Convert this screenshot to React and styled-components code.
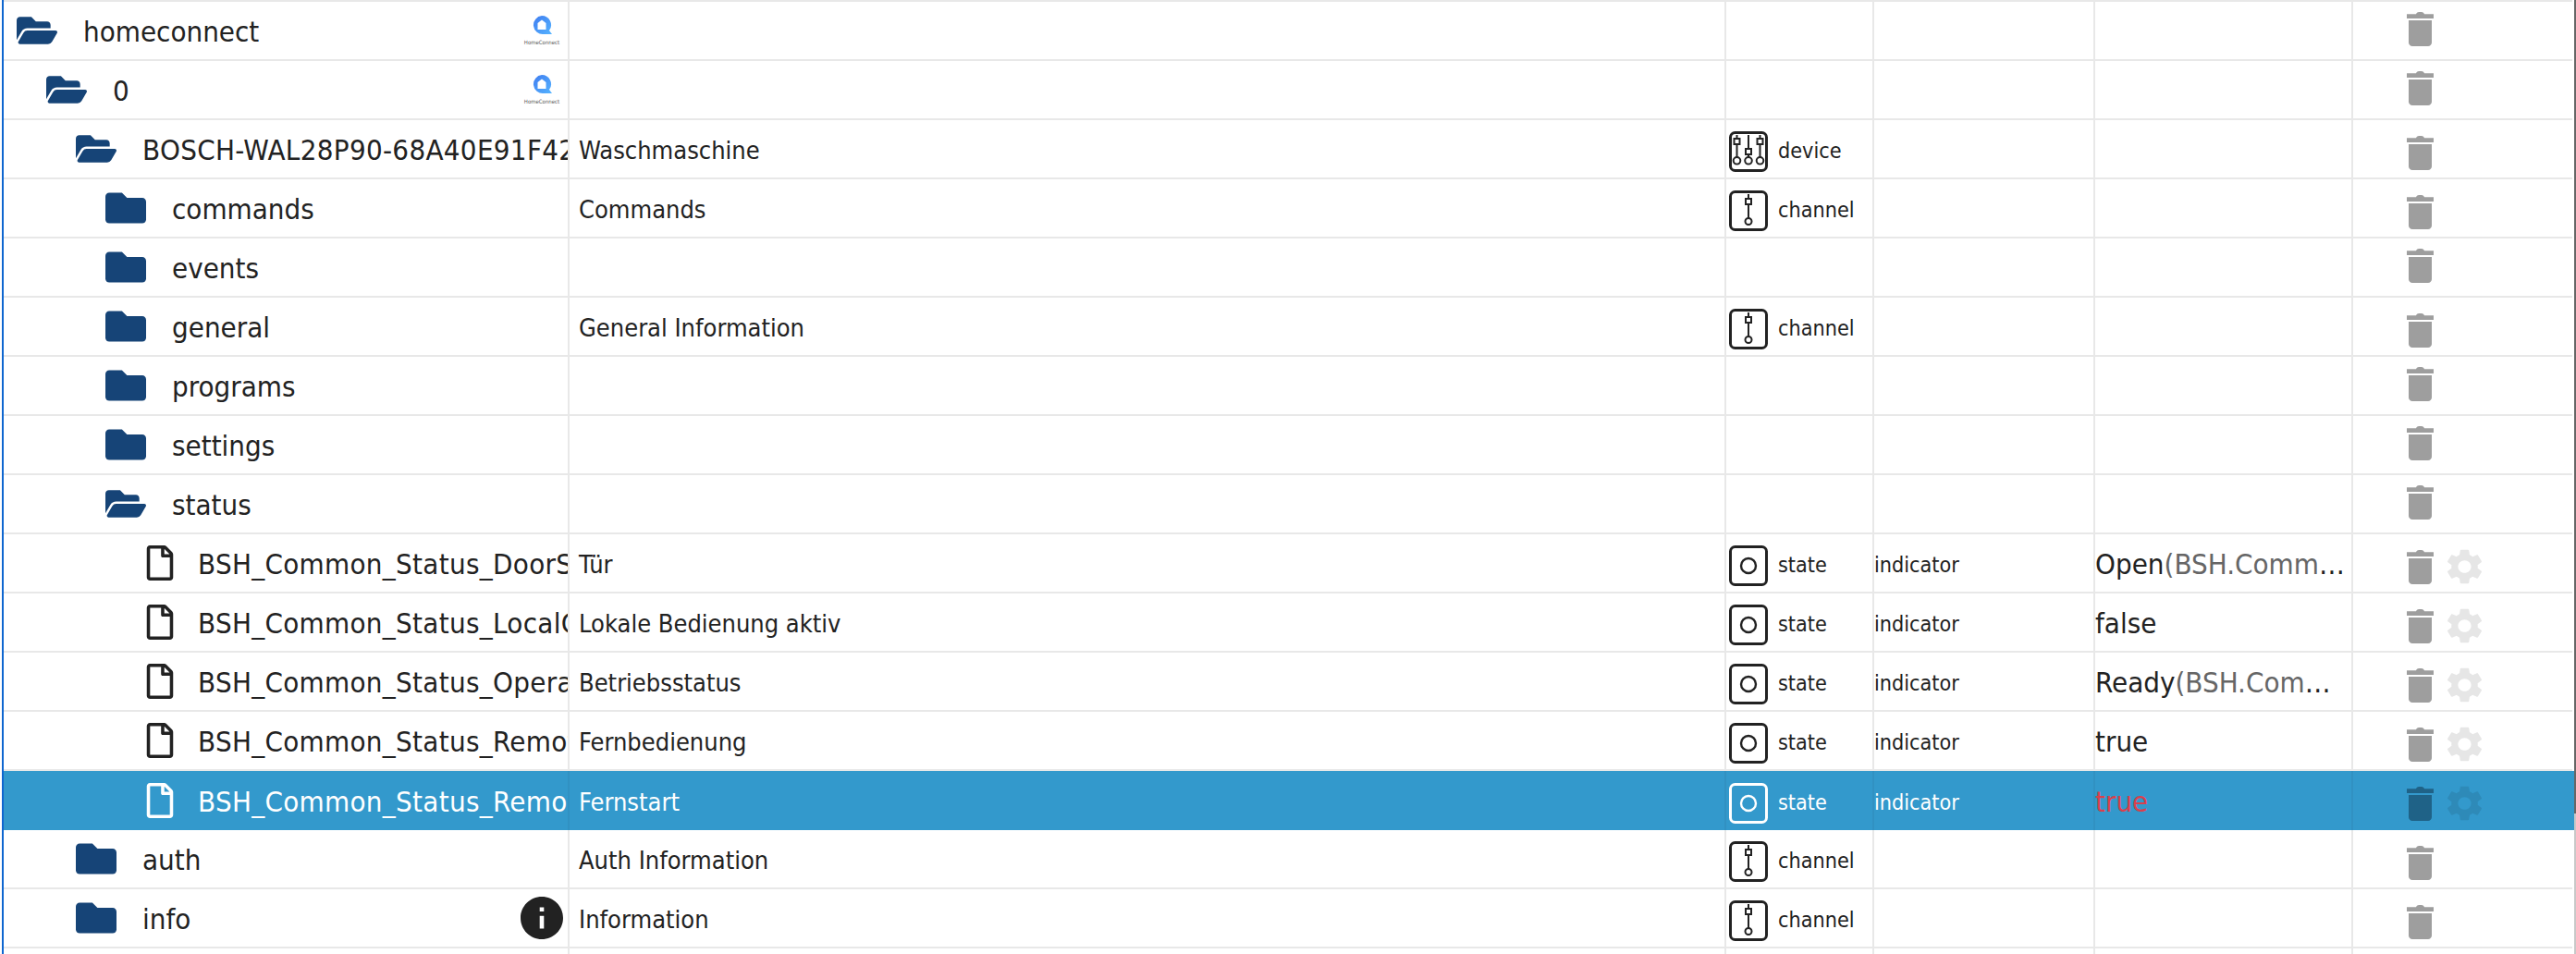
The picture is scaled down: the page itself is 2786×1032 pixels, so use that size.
import React from 'react';
import styled, { createGlobalStyle } from 'styled-components';
import { FaFolder, FaFolderOpen, FaRegFile } from 'react-icons/fa';

const Global = createGlobalStyle`
  html, body { margin: 0; padding: 0; background: #fff; overflow: hidden; }
  * { box-sizing: border-box; }
`;

const Page = styled.div`
  position: relative;
  width: 2786px;
  height: 1032px;
  overflow: hidden;
  background: #fff;
  padding-left: 2px;
  font-family: "DejaVu Sans Condensed", "DejaVu Sans", sans-serif;
  font-stretch: condensed;
  color: #222;
`;
const Table = styled.div`
  border-left: 2px solid #0f66cf;
  width: 2782px;
  height: 1032px;
  overflow: hidden;
`;
const TopRule = styled.div`
  height: 2px;
  margin-right: 2px;
  background: #e8e8e8;
`;
const Row = styled.div`
  display: grid;
  grid-template-columns: 612px 1251px 160px 239px 279px 1fr;
  height: 64px;
  margin-right: ${p => (p.$selected ? '0' : '2px')};
  background: ${p => (p.$selected ? '#3399cc' : '#fff')};
  color: ${p => (p.$selected ? '#fff' : '#222')};
  border-bottom: 2px solid ${p => (p.$selected ? '#3399cc' : '#e8e8e8')};
`;
const Cell = styled.div`
  display: flex;
  align-items: center;
  min-width: 0;
  overflow: hidden;
  white-space: nowrap;
  border-right: 2px solid ${p => (p.$selected ? '#3191c2' : '#e8e8e8')};
  margin-bottom: ${p => (p.$selected ? '-2px' : '0')};
`;
const NameCell = styled(Cell)`
  padding-left: ${p => p.$left}px;
`;
const IconSlot = styled.div`
  flex: none;
  width: ${p => p.$width}px;
  display: flex;
  align-items: center;
  font-size: ${p => p.$size}px;
  color: ${p => p.$color};
`;
const NameText = styled.span`
  flex: 1 1 auto;
  min-width: 0;
  overflow: hidden;
  font-size: 31px;
  padding-top: 2px;
  letter-spacing: ${p => (p.$wide ? '0.3px' : '0')};
`;
const TreeBadge = styled.div`
  flex: none;
  width: 46px;
  margin: 0 5px 0 4px;
  display: flex;
  flex-direction: column;
  align-items: center;
  color: #222;
`;
const BadgeLabel = styled.span`
  font-size: 6px;
  line-height: 7px;
  margin-top: 4px;
  color: #555;
  white-space: nowrap;
`;
const DescCell = styled(Cell)`
  padding-left: 10px;
  padding-top: 2px;
  font-size: 27px;
`;
const TypeCell = styled(Cell)`
  padding-left: 3px;
  gap: 11px;
  font-size: 23.2px;
`;
const TypeLabel = styled.span`
  padding-top: 2px;
`;
const TypeGlyph = styled.svg`
  flex: none;
  width: 42px;
  height: 44px;
  margin-top: 6px;
  color: ${p => (p.$selected ? '#fff' : '#222')};
`;
const RoleCell = styled(Cell)`
  font-size: 23.2px;
  padding-top: 2px;
`;
const ValueCell = styled(Cell)`
  font-size: 31px;
  padding-top: 2px;
`;
const ValueText = styled.span`
  display: block;
  width: 272px;
  overflow: hidden;
  text-overflow: ellipsis;
  color: ${p => (p.$selected ? '#d9404c' : '#222')};
`;
const ValueExtra = styled.span`
  color: #666;
`;
const Actions = styled.div`
  display: flex;
  align-items: center;
  gap: 15px;
  padding-left: 58px;
  padding-top: ${p => (p.$raised ? '0' : '8px')};
  padding-bottom: ${p => (p.$raised ? '4px' : '0')};
`;
const Trash = styled.svg`
  flex: none;
  width: 29px;
  height: 37px;
  color: ${p => (p.$selected ? '#1f6287' : '#9e9e9e')};
`;
const Gear = styled.svg`
  flex: none;
  width: 37px;
  height: 38px;
  color: ${p => (p.$selected ? '#2e8ab8' : '#e6e6e6')};
`;
const ScrollTrack = styled.div`
  position: absolute;
  top: 0;
  right: 0;
  width: 2px;
  height: 1032px;
  background: #c8c8c8;
`;
const ScrollThumb = styled.div`
  width: 2px;
  height: 880px;
  background: #666;
`;

const TrashIcon = ({ selected }) => (
  <Trash $selected={selected} viewBox="0 0 29 37">
    <path fill="currentColor" d="M10 2.2C10.6.8 12 0 13 0h3c1 0 2.4.8 3 2.2h10V7H0V2.2z" />
    <path fill="currentColor" d="M2 9h25v24c0 2.2-1.8 4-4 4H6c-2.2 0-4-1.8-4-4z" />
  </Trash>
);

const GearIcon = ({ selected }) => (
  <Gear $selected={selected} viewBox="2.65 2 18.7 20" preserveAspectRatio="none">
    <path fill="currentColor" d="M19.14 12.94c.04-.3.06-.61.06-.94 0-.32-.02-.64-.07-.94l2.03-1.58c.18-.14.23-.41.12-.61l-1.92-3.32c-.12-.22-.37-.29-.59-.22l-2.39.96c-.5-.38-1.03-.7-1.62-.94l-.36-2.54c-.04-.24-.24-.41-.48-.41h-3.84c-.24 0-.43.17-.47.41l-.36 2.54c-.59.24-1.13.57-1.62.94l-2.39-.96c-.22-.08-.47 0-.59.22L2.74 8.87c-.12.21-.08.47.12.61l2.03 1.58c-.05.3-.09.63-.09.94s.02.64.07.94l-2.03 1.58c-.18.14-.23.41-.12.61l1.92 3.32c.12.22.37.29.59.22l2.39-.96c.5.38 1.03.7 1.62.94l.36 2.54c.05.24.24.41.48.41h3.84c.24 0 .44-.17.47-.41l.36-2.54c.59-.24 1.13-.56 1.62-.94l2.39.96c.22.08.47 0 .59-.22l1.92-3.32c.12-.22.07-.47-.12-.61l-2.01-1.58zM12 15.6c-1.98 0-3.6-1.62-3.6-3.6s1.62-3.6 3.6-3.6 3.6 1.62 3.6 3.6-1.62 3.6-3.6 3.6z" />
  </Gear>
);

const Slider = ({ x, rectY, bottom, r }) => (
  <g>
    <line x1={x} y1="4" x2={x} y2={rectY} />
    <line x1={x} y1={rectY + 6} x2={x} y2={bottom} />
    <rect x={x - 3} y={rectY} width="6" height="6" />
    <circle cx={x} cy={bottom + r} r={r} />
  </g>
);

const TypeIcon = ({ kind, selected }) => (
  <TypeGlyph $selected={selected} viewBox="0 0 42 44" fill="none" stroke="currentColor" strokeWidth="2">
    <rect x="1.5" y="1.5" width="39" height="41" rx="5" strokeWidth="3" />
    {kind === 'state' && <circle cx="21" cy="22" r="8" strokeWidth="2.4" />}
    {kind === 'channel' && <Slider x={21} rectY={9} bottom={30} r={3.5} />}
    {kind === 'device' && (
      <>
        <Slider x={8.5} rectY={8} bottom={28} r={3.8} />
        <Slider x={21} rectY={19} bottom={28} r={3.8} />
        <Slider x={33.5} rectY={8} bottom={28} r={3.8} />
      </>
    )}
  </TypeGlyph>
);

const LogoMark = () => (
  <svg width="21" height="21" viewBox="0 0 21 21">
    <defs>
      <linearGradient id="hc" x1="0" y1="0" x2="1" y2="1">
        <stop offset="0" stopColor="#3f7cf0" />
        <stop offset="1" stopColor="#55b4ff" />
      </linearGradient>
    </defs>
    <path fill="url(#hc)" d="M10 0a10 10 0 0 1 8 16l3 4h-9a10 10 0 1 1-2-20z" />
    <path fill="#fff" d="M10 4.5l4.5 3.6V15h-9V8.1z" />
  </svg>
);

const HomeConnectBadge = () => (
  <TreeBadge>
    <LogoMark />
    <BadgeLabel>HomeConnect</BadgeLabel>
  </TreeBadge>
);

const InfoBadge = () => (
  <TreeBadge>
    <svg width="46" height="46" viewBox="2 2 20 20">
      <path fill="#222" d="M12 2C6.48 2 2 6.48 2 12s4.48 10 10 10 10-4.48 10-10S17.52 2 12 2zm1 15h-2v-6h2v6zm0-8h-2V7h2v2z" />
    </svg>
  </TreeBadge>
);

const rows = [
  { icon: 'open', left: 14, name: 'homeconnect', badge: 'logo' },
  { icon: 'open', left: 46, name: '0', badge: 'logo' },
  { icon: 'open', left: 78, name: 'BOSCH-WAL28P90-68A40E91F42C', wide: true, desc: 'Waschmaschine', type: 'device' },
  { icon: 'closed', left: 110, name: 'commands', desc: 'Commands', type: 'channel' },
  { icon: 'closed', left: 110, name: 'events' },
  { icon: 'closed', left: 110, name: 'general', desc: 'General Information', type: 'channel' },
  { icon: 'closed', left: 110, name: 'programs' },
  { icon: 'closed', left: 110, name: 'settings' },
  { icon: 'open', left: 110, name: 'status' },
  { icon: 'file', left: 150, name: 'BSH_Common_Status_DoorState', wide: true, desc: 'Tür', type: 'state', role: 'indicator', value: 'Open', extra: '(BSH.Common.EnumType.DoorState.Open)' },
  { icon: 'file', left: 150, name: 'BSH_Common_Status_LocalControlActive', wide: true, desc: 'Lokale Bedienung aktiv', type: 'state', role: 'indicator', value: 'false' },
  { icon: 'file', left: 150, name: 'BSH_Common_Status_OperationState', wide: true, desc: 'Betriebsstatus', type: 'state', role: 'indicator', value: 'Ready', extra: '(BSH.Common.EnumType.OperationState.Ready)' },
  { icon: 'file', left: 150, name: 'BSH_Common_Status_RemoteControlActive', wide: true, desc: 'Fernbedienung', type: 'state', role: 'indicator', value: 'true' },
  { icon: 'file', left: 150, name: 'BSH_Common_Status_RemoteControlStartAllowed', wide: true, desc: 'Fernstart', type: 'state', role: 'indicator', value: 'true', selected: true },
  { icon: 'closed', left: 78, name: 'auth', desc: 'Auth Information', type: 'channel' },
  { icon: 'closed', left: 78, name: 'info', desc: 'Information', type: 'channel', badge: 'info' },
  {},
];

const TreeIcon = ({ kind, selected }) => {
  if (kind === 'open') return <IconSlot $width={72} $size={44} $color="#164477"><FaFolderOpen /></IconSlot>;
  if (kind === 'closed') return <IconSlot $width={72} $size={44} $color="#164477"><FaFolder /></IconSlot>;
  if (kind === 'file') return <IconSlot $width={60} $size={38} $color={selected ? '#fff' : '#222'}><FaRegFile /></IconSlot>;
  return null;
};

const TreeRow = ({ row }) => {
  const s = row.selected;
  return (
    <Row $selected={s}>
      <NameCell $selected={s} $left={row.left || 0}>
        {row.icon && <TreeIcon kind={row.icon} selected={s} />}
        <NameText $wide={row.wide}>{row.name}</NameText>
        {row.badge === 'logo' && <HomeConnectBadge />}
        {row.badge === 'info' && <InfoBadge />}
      </NameCell>
      <DescCell $selected={s}>{row.desc}</DescCell>
      <TypeCell $selected={s}>
        {row.type && <TypeIcon kind={row.type} selected={s} />}
        {row.type && <TypeLabel>{row.type}</TypeLabel>}
      </TypeCell>
      <RoleCell $selected={s}>{row.role}</RoleCell>
      <ValueCell $selected={s}>
        {row.value && (
          <ValueText $selected={s}>
            {row.value}
            {row.extra && <ValueExtra>{row.extra}</ValueExtra>}
          </ValueText>
        )}
      </ValueCell>
      {row.name && (
        <Actions $raised={!row.type}>
          <TrashIcon selected={s} />
          {row.value && <GearIcon selected={s} />}
        </Actions>
      )}
    </Row>
  );
};

export default function App() {
  return (
    <Page>
      <Global />
      <Table>
        <TopRule />
        {rows.map((row, i) => <TreeRow key={i} row={row} />)}
      </Table>
      <ScrollTrack><ScrollThumb /></ScrollTrack>
    </Page>
  );
}
